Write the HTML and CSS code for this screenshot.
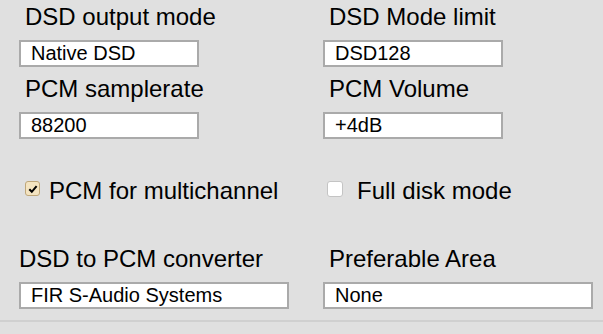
FILE: index.html
```html
<!DOCTYPE html>
<html>
<head>
<meta charset="utf-8">
<link rel="stylesheet" href="styles.css">
</head>
<body>
<div class="panel">
  <div class="grid">
    <div class="field">
      <div class="label ind">DSD output mode</div>
      <div class="box short">Native DSD</div>
    </div>
    <div class="field">
      <div class="label ind">DSD Mode limit</div>
      <div class="box short">DSD128</div>
    </div>
    <div class="field">
      <div class="label ind">PCM samplerate</div>
      <div class="box short">88200</div>
    </div>
    <div class="field">
      <div class="label ind">PCM Volume</div>
      <div class="box short">+4dB</div>
    </div>
  </div>
  <div class="grid checks">
    <div class="check-row left">
      <div class="cb checked"><svg class="tick" width="12" height="12" viewBox="0 0 12 12"><path d="M2.3 6.3 L4.8 8.8 L9.6 3.2" fill="none" stroke="#000" stroke-width="2"/></svg></div>
      <div class="check-label">PCM for multichannel</div>
    </div>
    <div class="check-row right">
      <div class="cb"></div>
      <div class="check-label wide">Full disk mode</div>
    </div>
  </div>
  <div class="grid bottom">
    <div class="field">
      <div class="label out">DSD to PCM converter</div>
      <div class="box long">FIR S-Audio Systems</div>
    </div>
    <div class="field">
      <div class="label ind">Preferable Area</div>
      <div class="box long">None</div>
    </div>
  </div>
  <div class="rule"></div>
</div>
</body>
</html>
```

FILE: styles.css
```css
html, body {
  margin: 0;
  padding: 0;
  background: #e0e0e0;
}
body {
  width: 603px;
  height: 334px;
  overflow: hidden;
  font-family: "Liberation Sans", Arial, sans-serif;
  color: #000;
}
.panel {
  padding-top: 3px;
}
.grid {
  display: grid;
  grid-template-columns: 304px 1fr;
  row-gap: 8px;
  padding-left: 19px;
}
.field {
  display: flex;
  flex-direction: column;
  align-items: flex-start;
}
.label {
  font-size: 24px;
  line-height: 28px;
  height: 28px;
  margin-bottom: 9px;
  white-space: nowrap;
}
.label.ind {
  padding-left: 6px;
}
.box {
  box-sizing: border-box;
  height: 27px;
  background: #fff;
  border: 2px solid #aaaaaa;
  font-size: 20px;
  line-height: 23px;
  padding-left: 10px;
  white-space: nowrap;
}
.box.short {
  width: 180px;
}
.box.long {
  width: 270px;
}
.checks {
  margin-top: 38px;
}
.check-row {
  display: flex;
  align-items: flex-start;
  height: 28px;
}
.check-row.left {
  padding-left: 6px;
}
.check-row.right {
  padding-left: 4px;
}
.cb {
  flex: 0 0 16px;
  box-sizing: border-box;
  width: 16px;
  min-width: 16px;
  height: 16px;
  margin-top: 4px;
  background: #ffffff;
  border: 1px solid #c4c4c4;
  border-radius: 3px;
  position: relative;
}
.cb.checked {
  flex-basis: 15px;
  width: 15px;
  min-width: 15px;
  height: 15px;
  background: #f4e4c1;
  border-color: #bfa77a;
}
.tick {
  display: block;
  margin: 0.5px;
}
.check-label {
  font-size: 24px;
  line-height: 28px;
  margin-left: 9px;
  white-space: nowrap;
}
.check-label.wide {
  margin-left: 14px;
}
.bottom {
  margin-top: 40px;
}
.rule {
  margin-top: 11px;
  height: 2px;
  background: #d0d0d0;
}
```
